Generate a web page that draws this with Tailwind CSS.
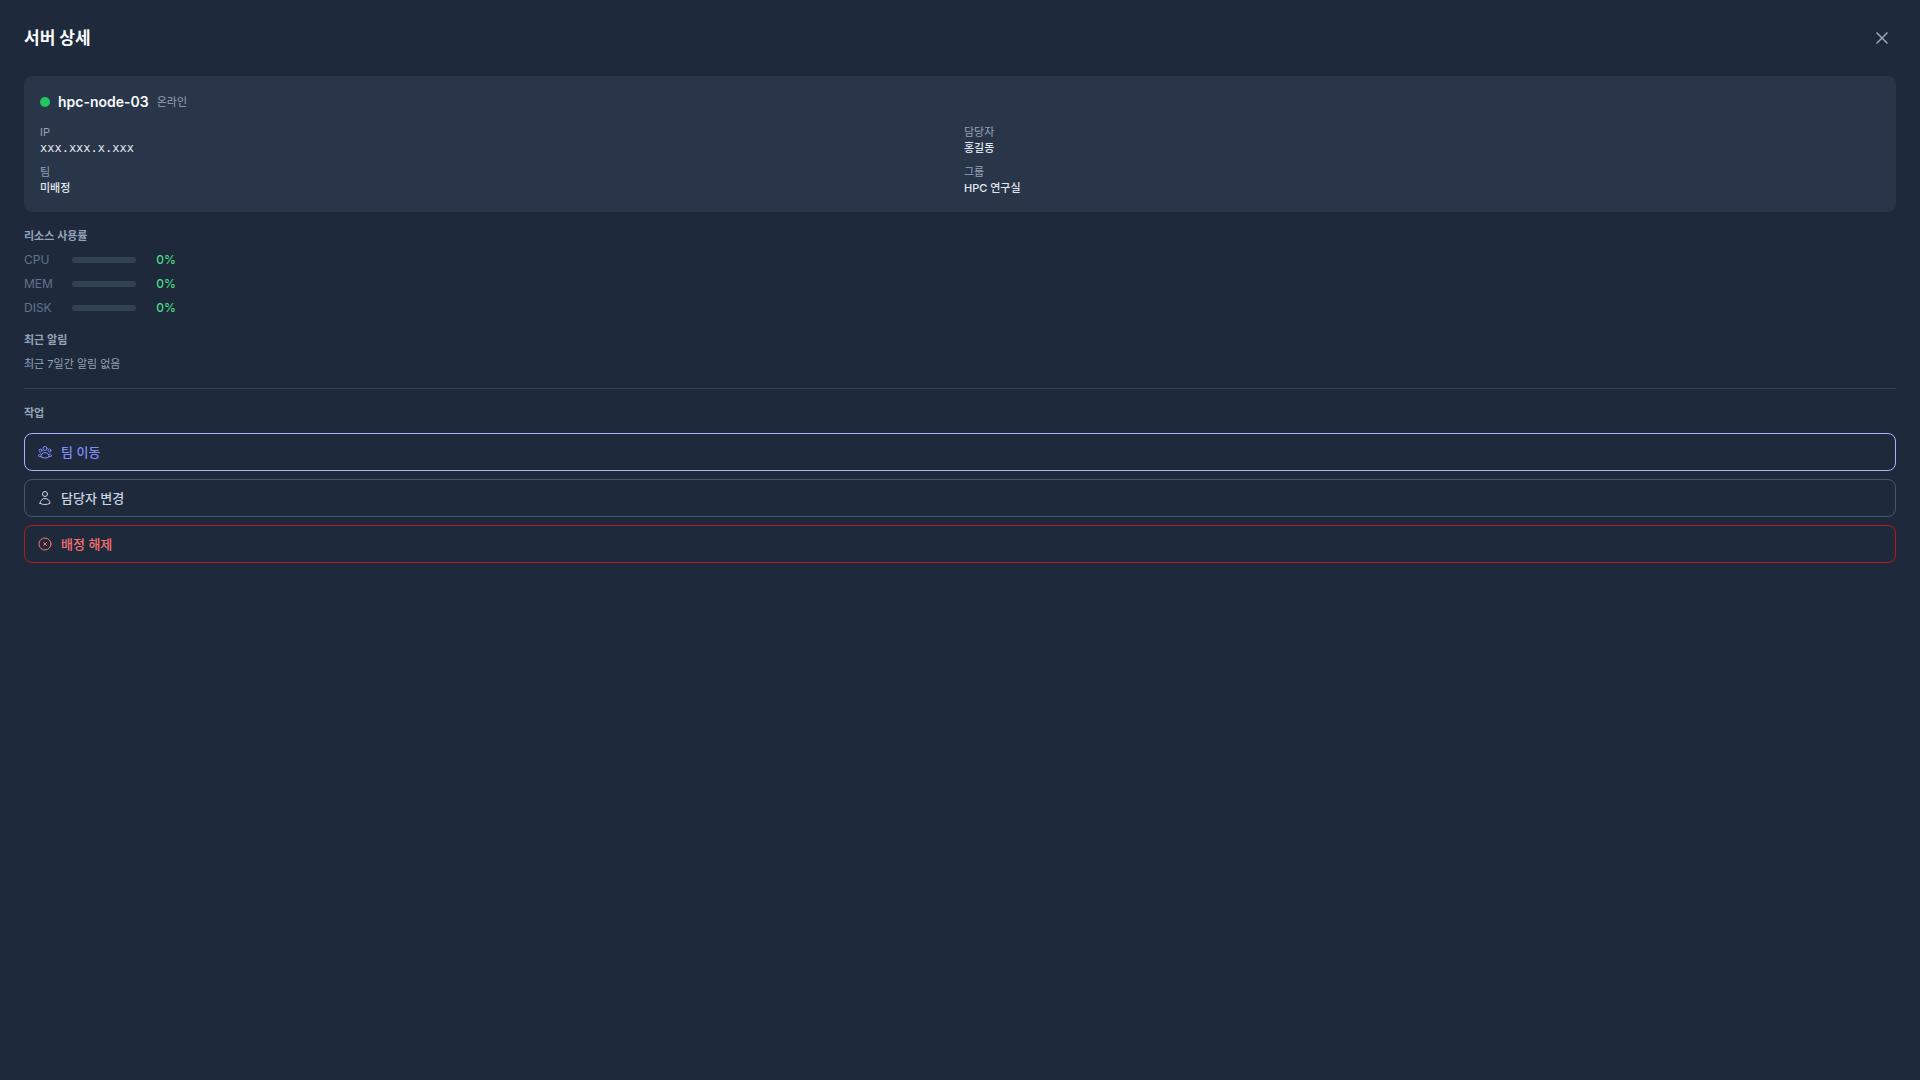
<!DOCTYPE html>
<html lang="ko">

<head>
    <meta charset="UTF-8">
    <meta name="viewport" content="width=device-width, initial-scale=1.0">
    <title>서버 상세</title>
    <script src="https://cdn.jsdelivr.net/npm/@tailwindcss/browser@4"></script>
</head>

<body class="min-h-screen bg-[#1e293b] p-6 font-['Inter','Noto_Sans_CJK_KR',sans-serif]">
    <!-- Header -->
    <header class="flex items-center justify-between mb-6">
        <h1 class="text-[17px] font-bold leading-7 text-[#f8fafc]">서버 상세</h1>
        <button type="button" aria-label="닫기" class="p-1 rounded text-[#94a3b8] hover:text-[#e2e8f0]">
            <svg class="w-5 h-5" fill="none" viewBox="0 0 24 24" stroke="currentColor" stroke-width="2">
                <path stroke-linecap="round" stroke-linejoin="round" d="M6 18 18 6M6 6l12 12" />
            </svg>
        </button>
    </header>

    <main class="space-y-4">
        <!-- Server info -->
        <section class="bg-[#334155]/50 rounded-lg p-4">
            <div class="flex items-center gap-2 mb-3 h-5">
                <span class="w-2.5 h-2.5 rounded-full bg-[#22c55e]"></span>
                <h2 class="text-sm font-semibold text-[#f8fafc]">hpc-node-03</h2>
                <span class="text-[11px] leading-4 text-[#94a3b8]">온라인</span>
            </div>
            <dl class="grid grid-cols-2 gap-2 text-[11px] leading-4">
                <div>
                    <dt class="text-[#94a3b8]">IP</dt>
                    <dd class="font-['DejaVu_Sans_Mono',monospace] text-xs text-[#e2e8f0]">xxx.xxx.x.xxx</dd>
                </div>
                <div>
                    <dt class="text-[#94a3b8]">담당자</dt>
                    <dd class="font-medium text-[#e2e8f0]">홍길동</dd>
                </div>
                <div>
                    <dt class="text-[#94a3b8]">팀</dt>
                    <dd class="font-medium text-[#e2e8f0]">미배정</dd>
                </div>
                <div>
                    <dt class="text-[#94a3b8]">그룹</dt>
                    <dd class="font-medium text-[#e2e8f0]">HPC 연구실</dd>
                </div>
            </dl>
        </section>

        <!-- Resource usage -->
        <section class="text-xs">
            <h3 class="mb-2 text-[11px] leading-4 font-semibold text-[#94a3b8]">리소스 사용률</h3>
            <div class="space-y-2">
                <div class="flex items-center gap-2">
                    <span class="w-10 text-[#64748b]">CPU</span>
                    <div class="w-16 h-1.5 rounded-full bg-[#334155]"></div>
                    <span class="w-8 text-right font-medium text-[#4ade80]">0%</span>
                </div>
                <div class="flex items-center gap-2">
                    <span class="w-10 text-[#64748b]">MEM</span>
                    <div class="w-16 h-1.5 rounded-full bg-[#334155]"></div>
                    <span class="w-8 text-right font-medium text-[#4ade80]">0%</span>
                </div>
                <div class="flex items-center gap-2">
                    <span class="w-10 text-[#64748b]">DISK</span>
                    <div class="w-16 h-1.5 rounded-full bg-[#334155]"></div>
                    <span class="w-8 text-right font-medium text-[#4ade80]">0%</span>
                </div>
            </div>
        </section>

        <!-- Recent alerts -->
        <section class="text-[11px] leading-4 text-[#94a3b8]">
            <h3 class="mb-2 font-semibold">최근 알림</h3>
            <p>최근 7일간 알림 없음</p>
        </section>

        <!-- Actions -->
        <section class="border-t border-[#334155] pt-4">
            <h3 class="mb-3 text-[11px] leading-4 font-semibold text-[#94a3b8]">작업</h3>
            <div class="space-y-2">
                <button type="button"
                    class="flex w-full items-center gap-2 rounded-lg border border-[#a5b4fc] px-3 py-2 text-[13px] leading-5 font-medium text-[#818cf8] hover:bg-indigo-900/20">
                    <svg class="w-4 h-4" fill="none" viewBox="0 0 24 24" stroke="currentColor" stroke-width="1.5">
                        <path stroke-linecap="round" stroke-linejoin="round"
                            d="M18 18.72a9.094 9.094 0 0 0 3.741-.479 3 3 0 0 0-4.682-2.72m.94 3.198.001.031c0 .225-.012.447-.037.666A11.944 11.944 0 0 1 12 21c-2.17 0-4.207-.576-5.963-1.584A6.062 6.062 0 0 1 6 18.719m12 0a5.971 5.971 0 0 0-.941-3.197m0 0A5.995 5.995 0 0 0 12 12.75a5.995 5.995 0 0 0-5.058 2.772m0 0a3 3 0 0 0-4.681 2.72 8.986 8.986 0 0 0 3.74.477m.94-3.197a5.971 5.971 0 0 0-.94 3.197M15 6.75a3 3 0 1 1-6 0 3 3 0 0 1 6 0Zm6 3a2.25 2.25 0 1 1-4.5 0 2.25 2.25 0 0 1 4.5 0Zm-13.5 0a2.25 2.25 0 1 1-4.5 0 2.25 2.25 0 0 1 4.5 0Z" />
                    </svg>
                    팀 이동
                </button>
                <button type="button"
                    class="flex w-full items-center gap-2 rounded-lg border border-[#475569] px-3 py-2 text-[13px] leading-5 font-medium text-[#cbd5e1] hover:bg-slate-700">
                    <svg class="w-4 h-4" fill="none" viewBox="0 0 24 24" stroke="currentColor" stroke-width="1.5">
                        <path stroke-linecap="round" stroke-linejoin="round"
                            d="M15.75 6a3.75 3.75 0 1 1-7.5 0 3.75 3.75 0 0 1 7.5 0ZM4.501 20.118a7.5 7.5 0 0 1 14.998 0A17.933 17.933 0 0 1 12 21.75c-2.676 0-5.216-.584-7.499-1.632Z" />
                    </svg>
                    담당자 변경
                </button>
                <button type="button"
                    class="flex w-full items-center gap-2 rounded-lg border border-[#b91c1c] px-3 py-2 text-[13px] leading-5 font-medium text-[#f87171] hover:bg-red-900/20">
                    <svg class="w-4 h-4" fill="none" viewBox="0 0 24 24" stroke="currentColor" stroke-width="1.5">
                        <path stroke-linecap="round" stroke-linejoin="round"
                            d="m9.75 9.75 4.5 4.5m0-4.5-4.5 4.5M21 12a9 9 0 1 1-18 0 9 9 0 0 1 18 0Z" />
                    </svg>
                    배정 해제
                </button>
            </div>
        </section>
    </main>
</body>

</html>
